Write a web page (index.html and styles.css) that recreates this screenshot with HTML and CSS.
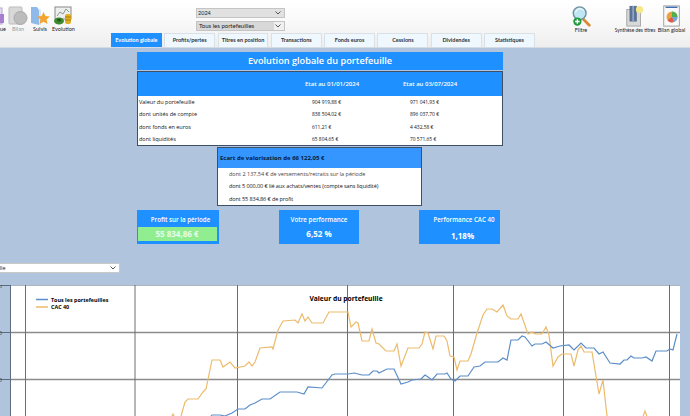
FILE: index.html
```html
<!DOCTYPE html>
<html lang="fr">
<head>
    <meta charset="UTF-8">
    <meta name="viewport" content="width=device-width, initial-scale=1.0">
    <title>Evolution globale du portefeuille</title>
    <link rel="stylesheet" href="styles.css">
</head>
<body>
    <!-- Toolbar -->
    <header class="toolbar">
        <div class="toolbar-top">
            <div class="tools tools-left">
                <div class="tool tool-first">
                    <svg width="18" height="20" viewBox="0 0 18 20"><rect x="2" y="2" width="12" height="16" fill="#e6dcf0" stroke="#b9a6d6"/><rect x="11" y="8" width="5" height="9" fill="#a77fd0"/></svg>
                    <span>Historique</span>
                </div>
                <div class="tool tool-off">
                    <svg width="20" height="20" viewBox="0 0 20 20"><rect x="1" y="1" width="13" height="17" rx="1" fill="#d8d8d8" stroke="#bdbdbd"/><circle cx="12.5" cy="12" r="6.5" fill="#bcbcbc" stroke="#a8a8a8"/></svg>
                    <span>Bilan</span>
                </div>
                <div class="tool">
                    <svg width="20" height="20" viewBox="0 0 20 20"><path d="M1 1h6l2 3v15l-8-2z" fill="#8fb9e8"/><path d="M7 1l2 3v15h2V4z" fill="#dce9f7"/><path d="M13.5 6l1.9 4 4.4.5-3.2 3 .9 4.400-4-2.200-4 2.200.9-4.400-3.200-3 4.400-.5z" fill="#f3a431"/></svg>
                    <span>Suivis</span>
                </div>
                <div class="tool">
                    <svg width="20" height="20" viewBox="0 0 20 20"><rect x="2" y="1" width="16" height="12" fill="#eeeeee" stroke="#8a8a8a"/><path d="M4 10l3-4 3 2 3-5 3 3" fill="none" stroke="#8a9a8a"/><ellipse cx="6" cy="15" rx="5" ry="3.500" fill="#3e8a2e"/><ellipse cx="6" cy="14" rx="2" ry="1.500" fill="#1f5a17"/><rect x="12" y="8" width="6" height="10" rx="2" fill="#e0b021"/><path d="M12 11h6M12 14h6" stroke="#a87f10"/></svg>
                    <span>Evolution</span>
                </div>
            </div>
            <div class="selects">
                <div class="select">
                    <span class="select-value">2024</span>
                    <svg class="chevron" width="6" height="4" viewBox="0 0 6 4"><path d="M.5.5L3 3 5.500.5" fill="none" stroke="#555"/></svg>
                </div>
                <div class="select select-focus">
                    <span class="select-value">Tous les portefeuilles</span>
                    <svg class="chevron" width="6" height="4" viewBox="0 0 6 4"><path d="M.5.5L3 3 5.500.5" fill="none" stroke="#555"/></svg>
                </div>
            </div>
            <div class="tools tools-right">
                <div class="tool tool-filter">
                    <svg width="21" height="24" viewBox="0 0 21 24"><path d="M12 15l7 7" stroke="#d98a35" stroke-width="3" stroke-linecap="round"/><circle cx="8.500" cy="9" r="7" fill="#bfe6f2" stroke="#6f8fa0" stroke-width="1.500"/><path d="M4 8a5 5 0 0 1 9-2" fill="none" stroke="#fff"/><circle cx="6" cy="18" r="4.500" fill="#1f9a3c"/><path d="M6 15.500v5M3.500 18h5" stroke="#fff" stroke-width="1.500"/></svg>
                    <span>Filtre</span>
                </div>
                <div class="tool tool-synth">
                    <svg width="20" height="24" viewBox="0 0 20 24"><rect x="1" y="5" width="15" height="18" fill="#d8d8d8" stroke="#a5a5a5"/><rect x="4" y="1" width="8" height="17" fill="#5a7296"/><rect x="7" y="1" width="2" height="17" fill="#8ea3c0"/><circle cx="15" cy="5" r="4" fill="#f4e88a"/></svg>
                    <span>Synthèse des titres</span>
                </div>
                <div class="tool tool-global">
                    <svg width="20" height="24" viewBox="0 0 20 24"><rect x="1" y="1" width="17" height="22" fill="#fafafa" stroke="#9a9a9a"/><path d="M3 2.500h13" stroke="#3c6fb0" stroke-width="1.500"/><circle cx="10" cy="13" r="6" fill="#f0a040"/><path d="M10 13V7a6 6 0 0 1 6 6z" fill="#4fb04f"/><path d="M10 13h6a6 6 0 0 1-4 5.600z" fill="#6fa8e0"/><path d="M10 13l2 5.600A6 6 0 0 1 5 16.500z" fill="#e05a4a"/></svg>
                    <span>Bilan global</span>
                </div>
            </div>
        </div>
        <nav class="tabs">
            <div class="tab tab-active">Evolution globale</div>
            <div class="tab">Profits/pertes</div>
            <div class="tab">Titres en position</div>
            <div class="tab">Transactions</div>
            <div class="tab">Fonds euros</div>
            <div class="tab">Cessions</div>
            <div class="tab">Dividendes</div>
            <div class="tab">Statistiques</div>
        </nav>
    </header>

    <!-- Summary -->
    <main class="summary">
        <h1 class="page-title">Evolution globale du portefeuille</h1>

        <table class="values">
            <thead>
                <tr><th></th><th>Etat au 01/01/2024</th><th>Etat au 03/07/2024</th></tr>
            </thead>
            <tbody>
                <tr><td>Valeur du portefeuille</td><td>904 919,88 €</td><td>971 041,93 €</td></tr>
                <tr><td>dont unités de compte</td><td>838 504,02 €</td><td>896 037,70 €</td></tr>
                <tr><td>dont fonds en euros</td><td>611,21 €</td><td>4 432,58 €</td></tr>
                <tr><td>dont liquidités</td><td>65 804,65 €</td><td>70 571,65 €</td></tr>
            </tbody>
        </table>

        <section class="gap-box">
            <h2>Ecart de valorisation de 66 122,05 €</h2>
            <p class="muted">dont 2 137,54 € de versements/retraits sur la période</p>
            <p class="tight">dont 5 000,00 € lié aux achats/ventes (compte sans liquidité)</p>
            <p class="tight">dont 55 834,86 € de profit</p>
        </section>

        <div class="cards">
            <div class="card card-profit">
                <span class="card-label">Profit sur la période</span>
                <span class="card-value card-value-green">55 834,86 €</span>
            </div>
            <div class="card card-perf">
                <span class="card-label">Votre performance</span>
                <span class="card-value">6,52 %</span>
            </div>
            <div class="card card-cac">
                <span class="card-label">Performance CAC 40</span>
                <span class="card-value card-value-low">1,18%</span>
            </div>
        </div>
    </main>

    <!-- Chart -->
    <div class="chart-select">
        <span>Valeur du portefeuille</span>
        <svg class="chevron" width="6" height="4" viewBox="0 0 6 4"><path d="M.5.5L3 3 5.500.5" fill="none" stroke="#555"/></svg>
    </div>

    <svg class="chart" width="690" height="131" viewBox="0 285 690 131">
        <rect x="10.500" y="285" width="669.500" height="131" fill="#fff"/>
        <path class="grid-h" d="M10 332.500H680M10 379.500H680"/>
        <path class="grid-v" d="M25.500 285V416M135 285V416M237.500 285V416M347.500 285V416M453.500 285V416M563.500 285V416M669.500 285V416"/>
        <path class="axis" d="M10.500 285H680M10.500 285V416M0 285.500H10M0 332.500H10M0 379.500H10"/>
        <g class="tick-labels">
            <text x="2" y="287.500" text-anchor="end">0</text>
            <text x="2" y="334.500" text-anchor="end">0</text>
            <text x="2" y="381.500" text-anchor="end">0</text>
        </g>
        <polyline class="line-cac" points="170,420 173,414 177,422 181,416 185,402 188,399 198,399 203,392 206,389 212,360 220,360 223,367 230,362 235,368 245,366 249,362 252,366 255,362 260,348 272,347 273,349 278,330 283,321 295,320 298,323 302,314 305,321 308,317 312,323 323,323 329,312 348,312 351,327 356,322 358,323 362,341 369,341 372,329 376,343 379,344 386,351 394,351 397,344 401,366 408,348 419,348 422,344 425,332 428,333 433,349 436,336 444,336 447,341 450,356 454,357 457,370 460,361 468,361 471,354 477,333 483,315 487,309 492,309 497,312 503,305 507,316 511,319 518,319 521,314 528,334 532,332 535,334 542,334 546,327 549,335 553,366 558,357 562,354 571,354 574,366 578,350 581,346 584,352 592,352 599,394 603,380 608,425 640,425 645,411 650,425"/>
        <polyline class="line-all" points="208,420 212,415 220,415 225,416 232,413 238,409 245,409 250,405 255,403 262,399 270,399 280,392 297,392 304,394 308,387 322,388 332,375 335,374 348,374 354,373 362,375 369,375 373,371 377,371 379,373 387,369 394,369 401,384 408,382 412,380 421,379 425,375 428,377 432,380 437,374 445,374 447,373 451,379 455,381 460,376 468,376 474,367 480,366 485,362 498,362 503,358 507,360 511,340 518,340 522,336 525,337 532,346 535,344 542,344 546,342 553,348 560,346 569,345 574,350 581,343 586,348 594,348 599,354 603,352 610,363 620,364 624,360 627,360 631,356 634,358 642,358 646,357 652,361 656,351 667,351 670,349 673,350 677,334"/>
        <path class="legend-all" d="M36 299.500H48"/>
        <path class="legend-cac" d="M36 307H48"/>
        <text class="legend-text" x="51" y="301.500">Tous les portefeuilles</text>
        <text class="legend-text" x="51" y="309">CAC 40</text>
        <text class="chart-title" x="346" y="300.500" text-anchor="middle">Valeur du portefeuille</text>
    </svg>
</body>
</html>
```

FILE: styles.css
```css
/* General Styles */
html, body {
    height: 416px;
    margin: 0;
    padding: 0;
    overflow: hidden;
}
body {
    background-color: #b0c4de;
    font-family: "Open Sans", "Noto Sans", sans-serif;
    color: #000;
}

/* Toolbar */
.toolbar {
    height: 48px;
    box-sizing: border-box;
    background: linear-gradient(#fff, #fafafa 40%, #eeeeee);
    border-bottom: 1px solid #d5dbe3;
    overflow: hidden;
    font-family: Lato, "Open Sans", sans-serif;
}
.toolbar-top {
    height: 33px;
    display: flex;
}
.tools {
    display: flex;
    align-items: flex-start;
}
.tools-left {
    margin-left: -14px;
    padding-top: 6px;
    width: 210px;
    gap: 2px;
}
.tool {
    display: flex;
    flex-direction: column;
    align-items: center;
    font-size: 5.500px;
    line-height: 7px;
    white-space: nowrap;
    color: #222;
}
.tool-first {
    width: 20px;
    align-items: flex-end;
}
.tool-off {
    color: #9a9a9a;
    width: 20px;
}
.tools-left .tool {
    min-width: 20px;
}
.tools-right {
    margin-left: auto;
    padding-top: 5px;
    padding-right: 5px;
}
.tools-right svg {
    height: 22px;
}
.tool-filter {
    width: 30px;
    margin-right: 19px;
}
.tool-synth {
    width: 40px;
    margin-right: 3px;
    font-size: 4.900px;
}
.tool-global {
    width: 27px;
}

/* Selects */
.selects {
    padding-top: 8px;
    width: 89px;
    display: flex;
    flex-direction: column;
    gap: 3px;
}
.select {
    height: 9.500px;
    box-sizing: border-box;
    background-color: #e1e1e1;
    border: 1px solid #c4c4c4;
    display: flex;
    align-items: center;
    justify-content: space-between;
    padding: 0 3px 0 1px;
    font-size: 5.500px;
    color: #222;
}
.select-focus {
    height: 10.500px;
    background: linear-gradient(to right, #d8d8d8 89%, #f0f0f0 89%);
    font-size: 6px;
    padding-left: 2px;
}

/* Tabs */
.tabs {
    display: flex;
    gap: 2.500px;
    padding-left: 111px;
}
.tab {
    width: 50.800px;
    height: 15px;
    box-sizing: border-box;
    background-color: #f0f8ff;
    border: 1px solid #d9e0e6;
    border-bottom: none;
    font-size: 5.500px;
    font-weight: 700;
    line-height: 13px;
    text-align: center;
    color: #333;
    white-space: nowrap;
}
.tab-active {
    background-color: #1e90ff;
    border-color: #1e90ff;
    color: #fff;
}

/* Summary */
.summary {
    width: 366px;
    margin: 4px 0 0 137px;
    font-size: 5.500px;
}
.page-title {
    margin: 0;
    height: 18px;
    background-color: #1e90ff;
    color: #fff;
    font-size: 9.200px;
    font-weight: 600;
    line-height: 18px;
    text-align: center;
}
.values {
    width: 100%;
    margin-top: 1px;
    border: 1px solid #3f4f66;
    border-collapse: collapse;
    background-color: #fff;
    table-layout: fixed;
}
.values th {
    height: 24px;
    padding: 0;
    background-color: #1e90ff;
    color: #fff;
    font-size: 6px;
    font-weight: 600;
    text-align: left;
    white-space: nowrap;
}
.values td {
    height: 12.250px;
    padding: 0;
    color: #111;
}
.values th:first-child, .values td:first-child {
    width: 166px;
    padding-left: 1px;
}
.values th:nth-child(2) {
    width: 98px;
}
.values td + td {
    padding-left: 7px;
    font-size: 4.900px;
}

/* Ecart box */
.gap-box {
    width: 205px;
    box-sizing: border-box;
    margin: 1px 0 0 80px;
    background-color: #fff;
    border: 1px solid #3f4f66;
}
.gap-box h2 {
    margin: 0;
    height: 20px;
    background-color: #3596ff;
    color: #06203d;
    font-size: 6px;
    font-weight: 700;
    line-height: 21px;
    padding-left: 2px;
}
.gap-box p {
    margin: 0 0 0 11px;
    height: 12.400px;
    line-height: 12.400px;
    color: #111;
    white-space: nowrap;
}
.gap-box .muted {
    color: #444;
}
.gap-box .tight {
    letter-spacing: -0.08px;
}

/* KPI cards */
.cards {
    display: flex;
    justify-content: space-between;
    margin-top: 4px;
    width: 363px;
}
.card {
    height: 34px;
    box-sizing: border-box;
    background-color: #1e90ff;
    color: #fff;
    display: flex;
    flex-direction: column;
    align-items: center;
    padding-top: 5px;
}
.card-profit {
    width: 82px;
}
.card-perf {
    width: 80px;
}
.card-cac {
    width: 81px;
}
.card-label {
    font-size: 6.200px;
    font-weight: 600;
    line-height: 9px;
}
.card-profit .card-label {
    padding-left: 5px;
}
.card-cac .card-label {
    padding-left: 9px;
}
.card-value {
    font-size: 8px;
    font-weight: 700;
    line-height: 12px;
    margin-top: 4px;
}
.card-value-low {
    margin-top: 6px;
    padding-left: 6px;
}
.card-value-green {
    width: 79px;
    height: 14px;
    margin: 3px 2px 0 0;
    background-color: #90ee90;
    line-height: 14px;
    text-align: center;
    color: #e9fbe9;
}

/* Chart */
.chart-select {
    width: 130px;
    height: 10px;
    box-sizing: border-box;
    margin: 19px 0 0 -10px;
    background-color: #fff;
    border: 1px solid #c9c9c9;
    display: flex;
    align-items: center;
    justify-content: space-between;
    padding-right: 3px;
    font-size: 5.500px;
    color: #222;
}
.chart-select span {
    margin-left: -41px;
    white-space: nowrap;
}
.chart {
    display: block;
    margin-top: 12px;
}
.grid-h {
    stroke: #8c8c8c;
    stroke-width: 1.300;
    fill: none;
}
.grid-v {
    stroke: #6e6e6e;
    fill: none;
}
.axis {
    stroke: #5d6b7f;
    fill: none;
}
.tick-labels {
    font-size: 6px;
    fill: #333;
}
.line-cac, .line-all {
    fill: none;
    stroke-width: 1.200;
}
.line-cac, .legend-cac {
    stroke: #ecbb6d;
}
.line-all, .legend-all {
    stroke: #5b8ec9;
}
.legend-cac, .legend-all {
    stroke-width: 1.500;
    fill: none;
}
.legend-text {
    font-size: 5.400px;
    font-weight: 700;
}
.chart-title {
    font-size: 6.700px;
    font-weight: 700;
}
```
